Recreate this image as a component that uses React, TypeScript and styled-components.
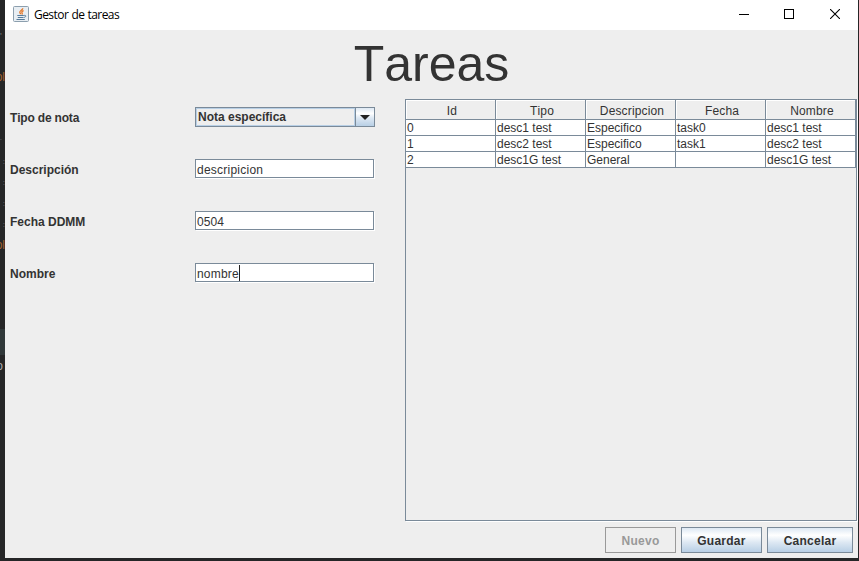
import React from "react";
import styled, { createGlobalStyle } from "styled-components";

const LINE = "#7a8a99";

const Global = createGlobalStyle`
  * { box-sizing: border-box; }
  html, body { margin: 0; background: #252627; overflow: hidden; }
  body {
    font: 12px/14px "Liberation Sans", Arial, sans-serif;
    font-kerning: none;
    color: #333;
  }
`;

const Desktop = styled.div`
  display: grid;
  grid-template-columns: 5px 853px 1px;
  height: 561px;
  background: #252627;
`;

const EditorEdge = styled.div`
  position: relative;
  height: 561px;
  overflow: hidden;
`;

const EditorBlock = styled.i`
  position: absolute;
  left: 0;
  top: 329px;
  width: 5px;
  height: 26px;
  background: #303839;
`;

const Fragment = styled.span<{ $top: number; $color: string; $right?: number; $size?: number }>`
  position: absolute;
  right: ${(p) => p.$right ?? 0}px;
  top: ${(p) => p.$top}px;
  font-size: ${(p) => p.$size ?? 12}px;
  line-height: 14px;
  color: ${(p) => p.$color};
`;

const Window = styled.main`
  display: flex;
  flex-direction: column;
  height: 558px;
  background: #eee;
`;

const TitleBar = styled.header`
  display: flex;
  align-items: center;
  height: 30px;
  padding-left: 8px;
  background: #fff;
`;

const AppIcon = styled.svg`
  margin-bottom: 2px;
`;

const Caption = styled.span`
  flex: 1;
  margin-left: 5px;
  font: 12px/16px "Open Sans", "Noto Sans", sans-serif;
  letter-spacing: -0.56px;
  word-spacing: 0.6px;
  color: #000;
`;

const WindowButton = styled.button`
  display: grid;
  place-items: center;
  width: 45px;
  height: 28px;
  margin: 0 0 2px;
  padding: 0;
  border: 0;
  background: none;
  &:last-child { width: 47px; }
`;

const Heading = styled.h1`
  margin: 4px 0 0;
  height: 60px;
  font-size: 50px;
  line-height: 60px;
  font-weight: 400;
  text-align: center;
`;

const Content = styled.div`
  display: grid;
  grid-template-columns: 400px 453px;
  margin-top: 5px;
  height: 423px;
`;

const Form = styled.form`
  display: flex;
  flex-direction: column;
  gap: 32px;
  padding: 8px 0 0 5px;
`;

const Field = styled.label`
  display: grid;
  grid-template-columns: 185px 180px;
  grid-template-rows: 20px;
  height: 20px;
`;

const FieldLabel = styled.span<{ $spacing?: number }>`
  font-weight: 700;
  line-height: 22px;
  letter-spacing: ${(p) => p.$spacing ?? 0}px;
`;

const Combo = styled.span`
  display: grid;
  grid-template-columns: 1fr 19px;
  grid-template-rows: 18px;
  height: 20px;
  border: 1px solid ${LINE};
`;

const ComboValue = styled.span`
  border: 1px solid #b8cfe5;
  padding-left: 1px;
  font-weight: 700;
  line-height: 17px;
`;

const ComboArrow = styled.span`
  display: grid;
  place-items: center;
  padding-top: 1px;
  border-left: 1px solid ${LINE};
  background: linear-gradient(#dde8f3 0%, #fff 30%, #dde8f3 55%, #b8cfe5 100%);
`;

const TextBox = styled.span<{ $spacing: number }>`
  display: flex;
  width: 179px;
  height: 19px;
  padding: 3px 0 0 1px;
  border: 1px solid ${LINE};
  background: #fff;
  box-shadow: 1px 1px #fff;
  letter-spacing: ${(p) => p.$spacing}px;
`;

const Caret = styled.i`
  width: 1px;
  height: 16px;
  margin-top: -2px;
  background: #222;
`;

const ScrollPane = styled.section`
  width: 452px;
  height: 422px;
  border: 1px solid ${LINE};
  box-shadow: 1px 1px #fff;
`;

const Table = styled.table`
  width: 450px;
  table-layout: fixed;
  border-collapse: separate;
  border-spacing: 0;
`;

const HeadCell = styled.th`
  height: 20px;
  padding: 2px 0 0 3px;
  border-right: 1px solid ${LINE};
  border-bottom: 1px solid ${LINE};
  box-shadow: inset 1px 1px #fff;
  font-weight: 400;
  letter-spacing: 0.15px;
  text-align: center;
`;

const Cell = styled.td`
  height: 16px;
  padding: 1px 0 0 1px;
  border-right: 1px solid ${LINE};
  border-bottom: 1px solid ${LINE};
  background: #fff;
  white-space: nowrap;
`;

const Actions = styled.footer`
  display: flex;
  justify-content: flex-end;
  margin: 5px 5px 0 0;
  gap: 5px;
`;

const Button = styled.button<{ $width: number }>`
  width: ${(p) => p.$width}px;
  height: 26px;
  padding: 2px 0 0;
  border: 1px solid ${LINE};
  background: linear-gradient(#dde8f3 0%, #fff 30%, #dde8f3 60%, #b8cfe5 100%);
  font: 700 12px/14px "Liberation Sans", Arial, sans-serif;
  font-kerning: none;
  letter-spacing: 0.25px;
  color: #333;
  &:disabled {
    border-color: #999;
    background: #eee;
    color: #999;
  }
`;

const columns = ["Id", "Tipo", "Descripcion", "Fecha", "Nombre"];
const rows = [
  ["0", "desc1 test", "Especifico", "task0", "desc1 test"],
  ["1", "desc2 test", "Especifico", "task1", "desc2 test"],
  ["2", "desc1G test", "General", "", "desc1G test"],
];
const fields = [
  { label: "Descripción", value: "descripicion", spacing: 0.24 },
  { label: "Fecha DDMM", value: "0504", spacing: 0.1 },
  { label: "Nombre", value: "nombre", spacing: 0.2, focused: true },
];
const fragments = [
  { text: ",", top: 25, color: "#999", right: 3, size: 8 },
  { text: "ol", top: 70, color: "#a3602f" },
  { text: ".", top: 131, color: "#777", right: 3, size: 8 },
  { text: ":", top: 155, color: "#777", size: 8 },
  { text: ":", top: 176, color: "#777", size: 8 },
  { text: ":", top: 197, color: "#777", size: 8 },
  { text: ":", top: 218, color: "#777", size: 8 },
  { text: "ol", top: 238, color: "#a3602f" },
  { text: "o", top: 359, color: "#aaa", right: 2 },
];

const JavaIcon = () => (
  <AppIcon width="16" height="16" viewBox="0 0 16 16" fill="none">
    <rect x="0.5" y="0.5" width="15" height="15" rx="1" fill="#e8eef3" stroke="#8c9fae" />
    <path d="M9.8 2.2C10 4 6.4 4.6 6.8 6.4c.1.7.9 1.1.9 1.9M10.6 4.6C9 5.2 8.2 6 9.2 7.2c.3.5 0 .9-.4 1.3" stroke="#e5792b" strokeWidth="1.3" />
    <path d="M4.3 9.5h6.5M4.8 11.5h5.5M3.5 13.5h8.3M10.8 9.5c2.8-.6 2.6 1.6-.2 2" stroke="#557b9b" strokeWidth="1" />
  </AppIcon>
);

export default function App() {
  return (
    <>
      <Global />
      <Desktop>
        <EditorEdge>
          <EditorBlock />
          {fragments.map((f) => (
            <Fragment key={f.top} $top={f.top} $color={f.color} $right={f.right} $size={f.size}>{f.text}</Fragment>
          ))}
        </EditorEdge>
        <Window>
          <TitleBar>
            <JavaIcon />
            <Caption>Gestor de tareas</Caption>
            <WindowButton aria-label="Minimizar">
              <svg width="10" height="10" shapeRendering="crispEdges"><path d="M0 5.5h10" stroke="#000" /></svg>
            </WindowButton>
            <WindowButton aria-label="Maximizar">
              <svg width="10" height="10" shapeRendering="crispEdges"><rect x=".5" y=".5" width="9" height="9" fill="none" stroke="#000" /></svg>
            </WindowButton>
            <WindowButton aria-label="Cerrar">
              <svg width="10" height="10"><path d="M0 0l10 10M10 0L0 10" stroke="#000" strokeWidth="1.1" /></svg>
            </WindowButton>
          </TitleBar>
          <Heading>Tareas</Heading>
          <Content>
            <Form>
              <Field>
                <FieldLabel $spacing={-0.18}>Tipo de nota</FieldLabel>
                <Combo>
                  <ComboValue>Nota específica</ComboValue>
                  <ComboArrow>
                    <svg width="10" height="5"><path d="M0 0h10L5 5z" fill="#222" /></svg>
                  </ComboArrow>
                </Combo>
              </Field>
              {fields.map((f) => (
                <Field key={f.label}>
                  <FieldLabel>{f.label}</FieldLabel>
                  <TextBox $spacing={f.spacing}>{f.value}{f.focused && <Caret />}</TextBox>
                </Field>
              ))}
            </Form>
            <ScrollPane>
              <Table>
                <thead>
                  <tr>{columns.map((c) => <HeadCell key={c}>{c}</HeadCell>)}</tr>
                </thead>
                <tbody>
                  {rows.map((r) => (
                    <tr key={r[0]}>{r.map((v, i) => <Cell key={i}>{v}</Cell>)}</tr>
                  ))}
                </tbody>
              </Table>
            </ScrollPane>
          </Content>
          <Actions>
            <Button $width={71} disabled>Nuevo</Button>
            <Button $width={81}>Guardar</Button>
            <Button $width={86}>Cancelar</Button>
          </Actions>
        </Window>
      </Desktop>
    </>
  );
}
